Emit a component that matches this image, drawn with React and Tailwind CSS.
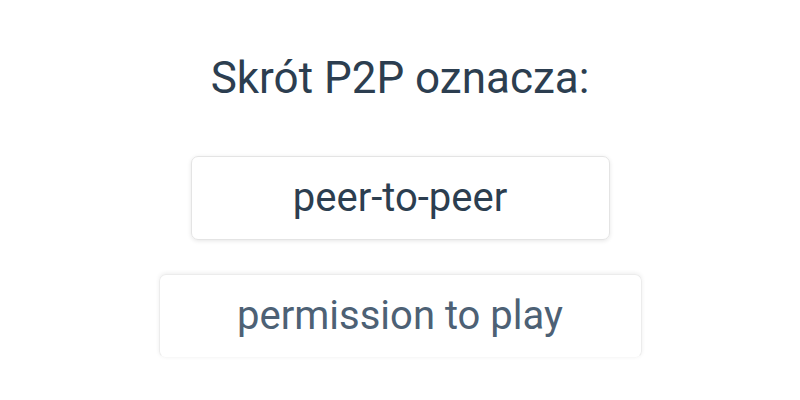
export default function App() {
  return (
    <div className="w-[800px] h-[400px] bg-white flex flex-col items-center" style={{ fontFamily: 'Roboto, sans-serif' }}>
      <h1 className="mt-[52px] h-[52px] flex items-center text-[44px] font-normal text-[#2c3e50] leading-none">Skrót P2P oznacza:</h1>
      <div className="mt-[52px] w-[419px] h-[84px] flex items-center justify-center rounded-[7px] border border-[#e4e4e4] shadow-[0_1px_4px_rgba(0,0,0,0.1)] text-[40px] text-[#2c3e50] leading-none">peer-to-peer</div>
      <div className="mt-[34px] w-[483px] h-[84px] flex items-center justify-center rounded-[7px] border border-[#ececec] border-b-[#f8f8f8] shadow-[0_-1px_4px_rgba(0,0,0,0.07)] text-[40px] text-[#4d6175] leading-none">permission to play</div>
    </div>
  );
}
